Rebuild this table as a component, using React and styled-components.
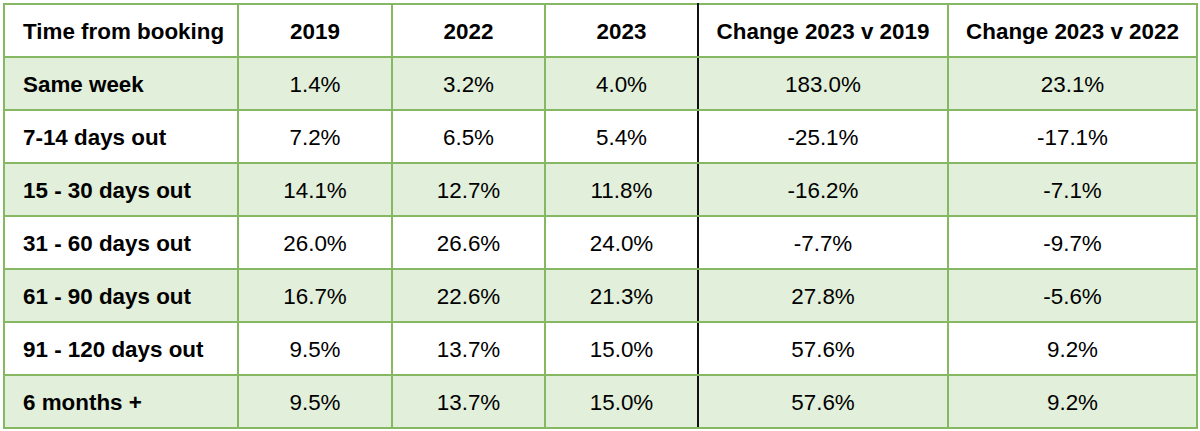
import styled, { createGlobalStyle } from "styled-components";

const GlobalStyle = createGlobalStyle`
  body {
    margin: 0;
    background: #ffffff;
    font-family: "Liberation Sans", Arial, sans-serif;
  }
`;

const Page = styled.div`
  padding: 3px 0 0 3px;
`;

const Table = styled.table`
  border-collapse: collapse;
  width: 1193px;
  table-layout: fixed;
  border: 2px solid #86b762;
  color: #000;
  font-size: 22.4px;
`;

const HeadCell = styled.th`
  height: 48px;
  padding: 3px 0 0 0;
  font-weight: bold;
  text-align: ${(p) => (p.$first ? "left" : "center")};
  padding-left: ${(p) => (p.$first ? "18px" : "0")};
  border: 2px solid #86b762;
  border-right: ${(p) => (p.$divider ? "2px solid #111" : "2px solid #86b762")};
  white-space: nowrap;
`;

const Row = styled.tr`
  background: ${(p) => (p.$shade ? "#e2efda" : "#ffffff")};
`;

const Cell = styled.td`
  height: 48px;
  padding: 3px 0 0 0;
  text-align: ${(p) => (p.$first ? "left" : "center")};
  padding-left: ${(p) => (p.$first ? "18px" : "0")};
  font-weight: ${(p) => (p.$first ? "bold" : "normal")};
  border: 2px solid #86b762;
  border-right: ${(p) => (p.$divider ? "2px solid #111" : "2px solid #86b762")};
  white-space: nowrap;
`;

const widths = [234, 154, 153, 153, 250, 249];

const headers = [
  "Time from booking",
  "2019",
  "2022",
  "2023",
  "Change 2023 v 2019",
  "Change 2023 v 2022",
];

const rows = [
  ["Same week", "1.4%", "3.2%", "4.0%", "183.0%", "23.1%"],
  ["7-14 days out", "7.2%", "6.5%", "5.4%", "-25.1%", "-17.1%"],
  ["15 - 30 days out", "14.1%", "12.7%", "11.8%", "-16.2%", "-7.1%"],
  ["31 - 60 days out", "26.0%", "26.6%", "24.0%", "-7.7%", "-9.7%"],
  ["61 - 90 days out", "16.7%", "22.6%", "21.3%", "27.8%", "-5.6%"],
  ["91 - 120 days out", "9.5%", "13.7%", "15.0%", "57.6%", "9.2%"],
  ["6 months +", "9.5%", "13.7%", "15.0%", "57.6%", "9.2%"],
];

export default function App() {
  return (
    <Page>
      <GlobalStyle />
      <Table>
        <colgroup>
          {widths.map((w, i) => (
            <col key={i} style={{ width: w }} />
          ))}
        </colgroup>
        <thead>
          <tr>
            {headers.map((h, i) => (
              <HeadCell key={h} $first={i === 0} $divider={i === 3}>
                {h}
              </HeadCell>
            ))}
          </tr>
        </thead>
        <tbody>
          {rows.map((r, ri) => (
            <Row key={r[0]} $shade={ri % 2 === 0}>
              {r.map((v, i) => (
                <Cell key={i} $first={i === 0} $divider={i === 3}>
                  {v}
                </Cell>
              ))}
            </Row>
          ))}
        </tbody>
      </Table>
    </Page>
  );
}
